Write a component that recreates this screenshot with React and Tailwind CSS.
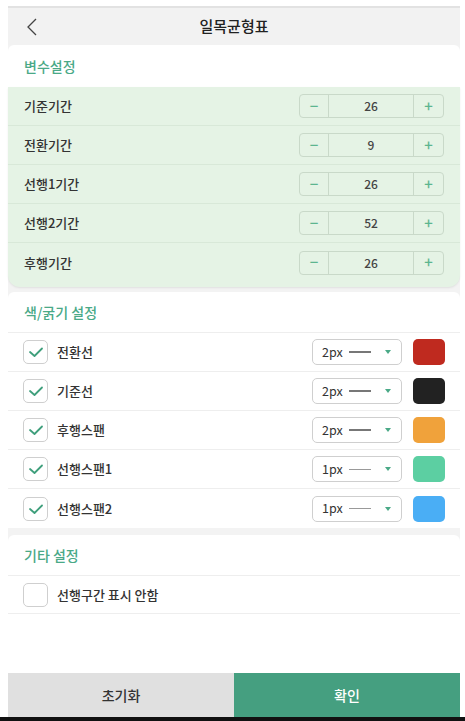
import { useState } from 'react';

const periods = [
    { label: '기준기간', value: 26 },
    { label: '전환기간', value: 9 },
    { label: '선행1기간', value: 26 },
    { label: '선행2기간', value: 52 },
    { label: '후행기간', value: 26 },
];

const lines = [
    { label: '전환선', width: '2px', color: 'bg-[#bf2a1f]' },
    { label: '기준선', width: '2px', color: 'bg-[#222222]' },
    { label: '후행스팬', width: '2px', color: 'bg-[#f0a23b]' },
    { label: '선행스팬1', width: '1px', color: 'bg-[#5ccfa2]' },
    { label: '선행스팬2', width: '1px', color: 'bg-[#4aaef5]' },
];

const CheckBox = ({ checked }) => (
    <div className="w-[25px] h-[24px] rounded-[5px] border border-[#cfcfcf] bg-white flex items-center justify-center">
        {checked && (
            <svg width="16" height="12" viewBox="0 0 16 12" fill="none">
                <path d="M2 6l4.5 4L14 2.5" stroke="#3f9f7c" strokeWidth="1.8" strokeLinecap="round" strokeLinejoin="round" />
            </svg>
        )}
    </div>
);

const Stepper = ({ value }) => (
    <div className="flex w-[145px] h-[24px] rounded-[4px] border border-[#c9d9c9] text-[12px] font-medium text-[#444]">
        <div className="w-[29px] flex items-center justify-center text-[#5db58f] text-[15px] border-r border-[#c9d9c9]">−</div>
        <div className="flex-1 flex items-center justify-center">{value}</div>
        <div className="w-[30px] flex items-center justify-center text-[#5db58f] text-[15px] border-l border-[#c9d9c9]">+</div>
    </div>
);

export default function App() {
    const [values] = useState(periods);

    return (
        <div
            className="w-[465px] h-[721px] bg-white flex flex-col pl-[8px] pr-[5px] pt-[6px] overflow-hidden"
            style={{ fontFamily: '"Noto Sans CJK KR", "Noto Sans", sans-serif' }}
        >
            <div className="flex-1 flex flex-col bg-[#f3f3f3] border-t-2 border-[#e2e2e2]">
                {/* Header */}
                <div className="h-[37px] relative flex items-center justify-center bg-[#f2f2f2]">
                    <svg className="absolute left-[17px]" width="14" height="20" viewBox="0 0 14 20" fill="none">
                        <path d="M11 2L3 10l8 8" stroke="#444" strokeWidth="1.3" />
                    </svg>
                    <span className="text-[15px] font-medium text-[#222]">일목균형표</span>
                </div>

                {/* 변수설정 */}
                <div className="bg-white rounded-t-[6px] h-[42px] flex items-center px-[16px]">
                    <span className="text-[14px] font-medium text-[#4aa987]">변수설정</span>
                </div>
                <div className="bg-[#e5f3e5] rounded-b-[12px] shadow-[0_1px_2px_rgba(0,0,0,0.08)] pb-[5px]">
                    {values.map((p, i) => (
                        <div
                            key={p.label}
                            className={`h-[39px] flex items-center justify-between pl-[16px] pr-[16px] ${i < values.length - 1 ? 'border-b border-[#d8e8d8]' : ''}`}
                        >
                            <span className="text-[13px] font-medium text-[#333]">{p.label}</span>
                            <Stepper value={p.value} />
                        </div>
                    ))}
                </div>

                {/* 색/굵기 설정 */}
                <div className="mt-[5px] bg-white rounded-t-[6px]">
                    <div className="h-[41px] flex items-center px-[16px] border-b border-[#eeeeee]">
                        <span className="text-[14px] font-medium text-[#4aa987]">색/굵기 설정</span>
                    </div>
                    {lines.map((l, i) => (
                        <div
                            key={l.label}
                            className={`h-[39px] flex items-center pl-[15px] pr-[15px] ${i < lines.length - 1 ? 'border-b border-[#eeeeee]' : ''}`}
                        >
                            <CheckBox checked />
                            <span className="ml-[9px] text-[13px] font-medium text-[#333] flex-1">{l.label}</span>
                            <div className="w-[90px] h-[26px] rounded-[5px] border border-[#cfcfcf] flex items-center pl-[9px] pr-[10px] text-[12.5px] text-[#333]">
                                <span>{l.width}</span>
                                <span className={`ml-[6px] w-[22px] ${l.width === '2px' ? 'h-[1.5px] bg-[#777]' : 'h-px bg-[#999]'}`} />
                                <span className="ml-auto w-0 h-0 border-l-[3.5px] border-r-[3.5px] border-t-[4px] border-l-transparent border-r-transparent border-t-[#4aa987]" />
                            </div>
                            <div className={`ml-[11px] w-[32px] h-[26px] rounded-[5px] ${l.color}`} />
                        </div>
                    ))}
                </div>

                {/* 기타 설정 */}
                <div className="mt-[7px] bg-white rounded-t-[6px] flex-1 flex flex-col">
                    <div className="h-[41px] flex items-center px-[16px] border-b border-[#eeeeee]">
                        <span className="text-[14px] font-medium text-[#4aa987]">기타 설정</span>
                    </div>
                    <div className="h-[38px] flex items-center pl-[15px] border-b border-[#eeeeee]">
                        <CheckBox checked={false} />
                        <span className="ml-[9px] text-[13px] font-medium text-[#333]">선행구간 표시 안함</span>
                    </div>
                    <div className="flex-1" />
                </div>

                {/* Buttons */}
                <div className="flex h-[44px]">
                    <button className="flex-1 bg-[#e0e0e0] text-[14px] font-medium text-[#333]">초기화</button>
                    <button className="flex-1 bg-[#459f80] text-[14px] font-medium text-white">확인</button>
                </div>
            </div>
            <div className="h-[4px] bg-[#111] -ml-[8px] -mr-[5px]" />
        </div>
    );
}
